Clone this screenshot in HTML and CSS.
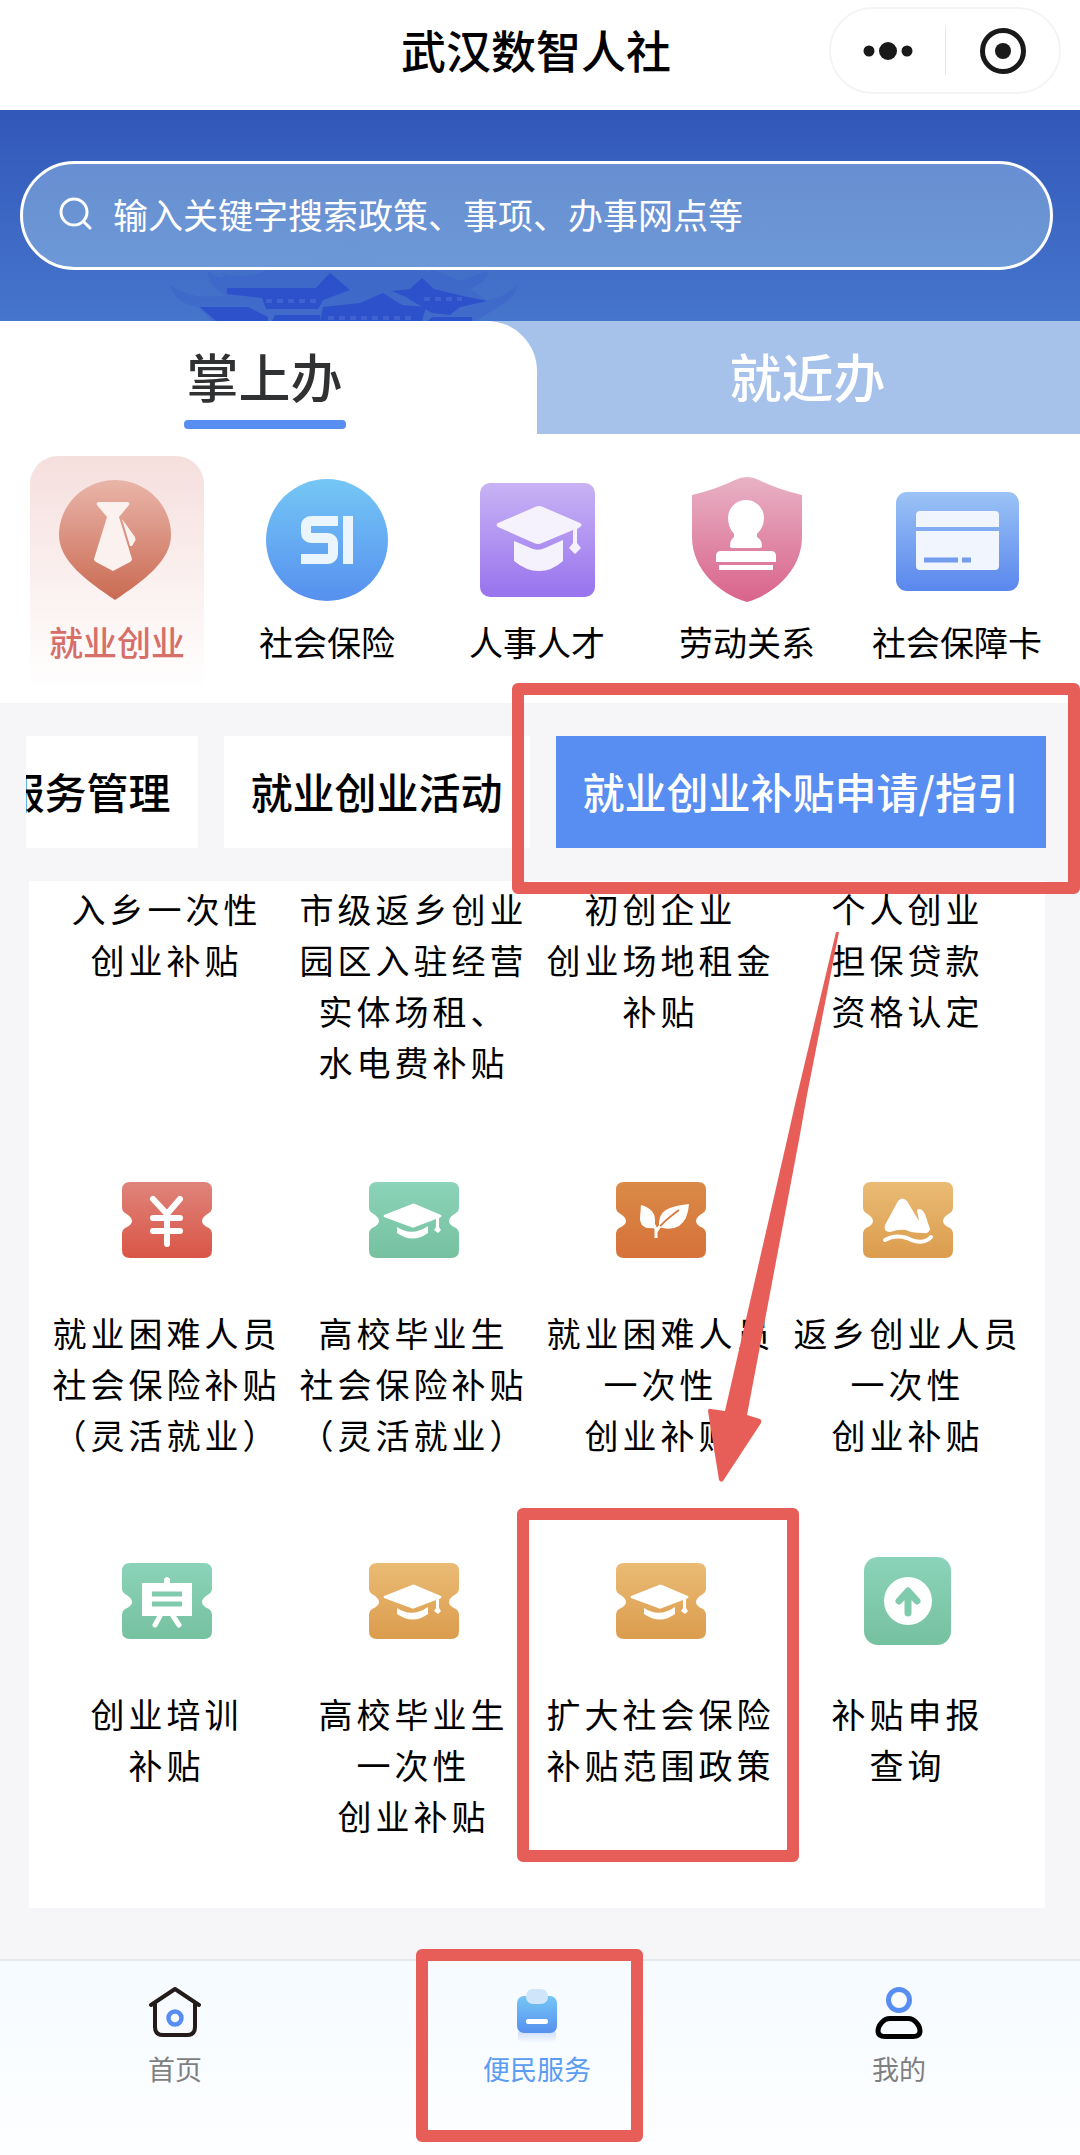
FILE: index.html
```html
<!DOCTYPE html>
<html lang="zh-CN">
<head>
  <meta charset="UTF-8" />
  <meta name="viewport" content="width=device-width, initial-scale=1" />
  <title>武汉数智人社</title>
  <link rel="stylesheet" href="styles.css">
</head>
<body>
  <!-- shared gradients and symbols -->
  <svg class="defs" width="0" height="0" aria-hidden="true">
    <defs>
      <linearGradient id="gRed" x1="0" y1="0" x2="0" y2="1"><stop offset="0" stop-color="#df847b"/><stop offset="1" stop-color="#d95546"/></linearGradient>
      <linearGradient id="gGreen" x1="0" y1="0" x2="0" y2="1"><stop offset="0" stop-color="#8bd3b9"/><stop offset="1" stop-color="#76c1a0"/></linearGradient>
      <linearGradient id="gOrange" x1="0" y1="0" x2="0" y2="1"><stop offset="0" stop-color="#da8a46"/><stop offset="1" stop-color="#d6713b"/></linearGradient>
      <linearGradient id="gGold" x1="0" y1="0" x2="0" y2="1"><stop offset="0" stop-color="#eabb75"/><stop offset="1" stop-color="#db9c4d"/></linearGradient>
      <linearGradient id="gPin" x1="0" y1="0" x2="0" y2="1"><stop offset="0" stop-color="#e9b5a9"/><stop offset="1" stop-color="#ca6a52"/></linearGradient>
      <linearGradient id="gSi" x1="0" y1="0" x2="0" y2="1"><stop offset="0" stop-color="#75c7f5"/><stop offset="1" stop-color="#5690ef"/></linearGradient>
      <linearGradient id="gPurple" x1="0" y1="0" x2="0" y2="1"><stop offset="0" stop-color="#c9b3f4"/><stop offset="1" stop-color="#9873ee"/></linearGradient>
      <linearGradient id="gPink" x1="0" y1="0" x2="0" y2="1"><stop offset="0" stop-color="#e8b2c5"/><stop offset="1" stop-color="#d9638b"/></linearGradient>
      <linearGradient id="gCard" x1="0" y1="0" x2="0" y2="1"><stop offset="0" stop-color="#9bc3f5"/><stop offset="1" stop-color="#5a87ee"/></linearGradient>
      <linearGradient id="gShade" x1="0" y1="0" x2="0" y2="1"><stop offset="0" stop-color="#c3d6fb"/><stop offset="1" stop-color="#c3d6fb" stop-opacity="0"/></linearGradient>
      <symbol id="ticket" viewBox="0 0 90 76">
        <path d="M8 0H82Q90 0 90 8V26Q90 29 87 31Q80 35 80 39T87 46Q90 48 90 51V68Q90 76 82 76H8Q0 76 0 68V51Q0 48 3 46Q10 43 10 39T3 31Q0 29 0 26V8Q0 0 8 0Z"/>
      </symbol>
      <symbol id="cap" viewBox="0 0 90 76">
        <path d="M15 33L43 22Q44 21 46 22L72 33Q73 34 72 35L70 36V45L72 48L69 51L65 48L67 45V37L46 45Q44 46 42 45L15 35Q14 34 15 33Z" fill="#fff"/>
        <path d="M28 45Q43 55 59 44V51Q44 62 28 51Z" fill="#fff"/>
      </symbol>
    </defs>
  </svg>

  <div class="page">
    <header class="topbar">
      <h1>武汉数智人社</h1>
      <div class="capsule">
        <button type="button" aria-label="更多">
          <svg width="50" height="20" viewBox="0 0 50 20"><circle cx="6" cy="10" r="5.5" fill="#191919"/><circle cx="25" cy="10" r="9" fill="#191919"/><circle cx="44" cy="10" r="5.5" fill="#191919"/></svg>
        </button>
        <button type="button" aria-label="关闭">
          <svg width="48" height="48" viewBox="0 0 48 48"><circle cx="24" cy="24" r="20.5" fill="none" stroke="#191919" stroke-width="5"/><circle cx="24" cy="24" r="8" fill="#191919"/></svg>
        </button>
      </div>
    </header>

    <section class="hero">
      <svg class="pagoda" width="350" height="100" viewBox="0 0 350 100" aria-hidden="true">
        <path d="M178 10H182L186 28Q200 42 232 50L226 44L262 52L257 46L290 60L318 50Q318 60 300 68L316 79Q338 76 347 63Q348 76 328 86L306 100H42L28 86Q4 82 0 64Q22 80 56 74Q38 66 38 50Q48 58 54 56L52 52Q80 60 98 48Q150 44 176 28Z" fill="#3a5fcb" opacity="0.4"/>
        <g fill="#2a4ccc" opacity="0.85">
          <path d="M57 67H146L160 52L180 69L153 79L148 88H96L92 77L57 73Z"/>
          <path d="M153 86L190 82L213 72L232 84L256 86L252 100H150Z"/>
          <path d="M222 70L240 68L252 57L264 68L297 76L317 80L290 86L280 94L262 92L236 76Z"/>
          <path d="M30 86H78L98 96V100H46Z"/>
          <path d="M105 94H150V100H102ZM262 96H302V100H258Z"/>
        </g>
        <path d="M96 80H146M254 78H292M158 97H246" stroke="#5a7cda" stroke-width="4" stroke-dasharray="6 5" opacity="0.4"/>
      </svg>
      <label class="search">
        <svg width="34" height="34" viewBox="0 0 34 34" fill="none" stroke="#fff" stroke-width="3" stroke-linecap="round"><circle cx="15" cy="15" r="13"/><path d="M25 25L31 31"/></svg>
        <input type="search" placeholder="输入关键字搜索政策、事项、办事网点等" aria-label="搜索">
      </label>
    </section>

    <nav class="tabs">
      <button type="button" class="tab active">掌上办</button>
      <button type="button" class="tab">就近办</button>
    </nav>

    <nav class="categories">
      <a class="category selected" href="#">
        <svg width="124" height="126" viewBox="0 0 124 126">
          <path d="M60 3C90 3 116 27 116 58C116 84 88 104 60 123C32 104 4 84 4 58C4 27 30 3 60 3Z" fill="url(#gPin)"/>
          <path d="M43 25H73Q75 26 74 28L64 40L77 82Q77 84 75 85L58 94L41 85Q39 84 39 82L52 40L42 28Q41 26 43 25Z" fill="#fbf1ef"/>
          <path d="M67 42L80 60Q81 63 80 64L77 69H75Z" fill="#fbf1ef"/>
        </svg>
        <span>就业创业</span>
      </a>
      <a class="category" href="#">
        <svg width="124" height="126" viewBox="0 0 124 126">
          <circle cx="62" cy="63" r="61" fill="url(#gSi)"/>
          <path d="M73 44H47Q41 44 41 49V55Q41 61 47 61H62Q68 61 68 67V76Q68 82 62 82H36M83 39V87" fill="none" stroke="#eaf5fe" stroke-width="10"/>
        </svg>
        <span>社会保险</span>
      </a>
      <a class="category" href="#">
        <svg width="124" height="126" viewBox="0 0 124 126">
          <rect x="5" y="6" width="115" height="114" rx="10" fill="url(#gPurple)"/>
          <path d="M23 46L60 30Q64 28 68 30L105 46Q108 48 105 50L102 52V66L106 71L100 77L94 71L98 66V53L67 66Q63 68 59 66L23 50Q20 48 23 46Z" fill="#f5f2fd"/>
          <path d="M39 64L58 72Q64 74 70 71L88 63V84Q77 94 64 94T39 84Z" fill="#f5f2fd"/>
        </svg>
        <span>人事人才</span>
      </a>
      <a class="category" href="#">
        <svg width="124" height="126" viewBox="0 0 124 126">
          <path d="M50 3Q62-3 74 3Q92 12 117 18V60C117 92 90 117 62 125C34 117 7 92 7 60V18Q32 12 50 3Z" fill="url(#gPink)"/>
          <path d="M61 23A18 18 0 0 1 79 41Q79 50 72 57V60Q77 63 77 69Q77 71 74 71H48Q45 71 45 69Q45 63 49 60V57Q43 50 43 41A18 18 0 0 1 61 23Z" fill="#fff"/>
          <path d="M36 74H86Q91 74 91 79V85H31V79Q31 74 36 74ZM34 88H88V93H34Z" fill="#fff"/>
        </svg>
        <span>劳动关系</span>
      </a>
      <a class="category" href="#">
        <svg width="124" height="126" viewBox="-1 0 124 126">
          <rect x="0" y="15" width="123" height="99" rx="11" fill="url(#gCard)"/>
          <path d="M24 34H99Q103 34 103 38V50H20V38Q20 34 24 34ZM20 54H103V89Q103 93 99 93H24Q20 93 20 89Z" fill="#f1f6fe"/>
          <path d="M28 83H62M66 83H75" stroke="#759bef" stroke-width="5"/>
        </svg>
        <span>社会保障卡</span>
      </a>
    </nav>

    <main>
      <div class="chips">
        <button type="button" class="chip">服务管理</button>
        <button type="button" class="chip">就业创业活动</button>
        <button type="button" class="chip current">就业创业补贴申请/指引</button>
      </div>

      <section class="services">
        <a class="service" href="#">入乡一次性<br>创业补贴</a>
        <a class="service" href="#">市级返乡创业<br>园区入驻经营<br>实体场租、<br>水电费补贴</a>
        <a class="service" href="#">初创企业<br>创业场地租金<br>补贴</a>
        <a class="service" href="#">个人创业<br>担保贷款<br>资格认定</a>

        <a class="service with-icon" href="#">
          <svg width="90" height="100" viewBox="0 -12 90 100">
            <use href="#ticket" width="90" height="76" fill="url(#gRed)"/>
            <path d="M31 17L45 32L58 17M45 32V62M31 36H58M31 49H58" fill="none" stroke="#fff" stroke-width="6" stroke-linecap="round"/>
          </svg>
          就业困难人员<br>社会保险补贴<br>（灵活就业）
        </a>
        <a class="service with-icon" href="#">
          <svg width="90" height="100" viewBox="0 -12 90 100">
            <use href="#ticket" width="90" height="76" fill="url(#gGreen)"/>
            <use href="#cap" width="90" height="76"/>
          </svg>
          高校毕业生<br>社会保险补贴<br>（灵活就业）
        </a>
        <a class="service with-icon" href="#">
          <svg width="90" height="100" viewBox="0 -12 90 100">
            <use href="#ticket" width="90" height="76" fill="url(#gOrange)"/>
            <path d="M25 23Q39 27 39 38V46Q24 48 24 36ZM43 45Q42 30 54 26Q62 23 73 22Q72 38 63 44Q56 48 47 46Z" fill="#fff"/>
            <path d="M63 28Q44 42 43 47" fill="none" stroke="#d87b40" stroke-width="2"/>
            <path d="M35 38L40 47V56M40 50L44 44" fill="none" stroke="#fff" stroke-width="3"/>
          </svg>
          就业困难人员<br>一次性<br>创业补贴
        </a>
        <a class="service with-icon" href="#">
          <svg width="90" height="100" viewBox="0 -12 90 100">
            <use href="#ticket" width="90" height="76" fill="url(#gGold)"/>
            <path d="M35 19Q39 14 44 19L56 39L54 28Q58 25 62 32L67 47Q66 52 60 51Q48 51 43 48Q36 47 27 50Q20 50 22 43Z" fill="#fff"/>
            <path d="M22 58Q32 52 44 56Q60 64 68 55" fill="none" stroke="#fff" stroke-width="4" stroke-linecap="round"/>
          </svg>
          返乡创业人员<br>一次性<br>创业补贴
        </a>

        <a class="service with-icon" href="#">
          <svg width="90" height="100" viewBox="0 -12 90 100">
            <use href="#ticket" width="90" height="76" fill="url(#gGreen)"/>
            <path d="M20 20H42V16Q45 12 48 16V20H70V53H20Z" fill="#fff"/>
            <path d="M30 31H60M30 41H60" stroke="#80cbae" stroke-width="5"/>
            <path d="M38 53L33 62M51 53L57 62" stroke="#fff" stroke-width="5" stroke-linecap="round"/>
          </svg>
          创业培训<br>补贴
        </a>
        <a class="service with-icon" href="#">
          <svg width="90" height="100" viewBox="0 -12 90 100">
            <use href="#ticket" width="90" height="76" fill="url(#gGold)"/>
            <use href="#cap" width="90" height="76"/>
          </svg>
          高校毕业生<br>一次性<br>创业补贴
        </a>
        <a class="service with-icon" href="#">
          <svg width="90" height="100" viewBox="0 -12 90 100">
            <use href="#ticket" width="90" height="76" fill="url(#gGold)"/>
            <use href="#cap" width="90" height="76"/>
          </svg>
          扩大社会保险<br>补贴范围政策
        </a>
        <a class="service with-icon" href="#">
          <svg width="90" height="100" viewBox="0 -12 90 100">
            <rect x="1" y="-6" width="87" height="88" rx="14" fill="url(#gGreen)"/>
            <circle cx="45" cy="38" r="24" fill="#fff"/>
            <path d="M45 50V29M36 38L45 28L54 38" fill="none" stroke="#80cbae" stroke-width="7" stroke-linecap="round" stroke-linejoin="round"/>
          </svg>
          补贴申报<br>查询
        </a>
      </section>
    </main>

    <footer class="tabbar">
      <a href="#">
        <svg width="56" height="60" viewBox="0 0 56 60" fill="none">
          <path d="M4 20L28 4L52 20M8 19V42Q8 50 16 50H40Q48 50 48 42V19" stroke="#231c18" stroke-width="4" stroke-linecap="round" stroke-linejoin="round"/>
          <circle cx="28" cy="33" r="6.5" stroke="#588df1" stroke-width="4.5"/>
        </svg>
        <span>首页</span>
      </a>
      <a class="on" href="#">
        <svg width="56" height="60" viewBox="0 0 56 60">
          <rect x="9" y="44" width="38" height="14" rx="5" fill="url(#gShade)"/>
          <rect x="8" y="11" width="40" height="37" rx="7" fill="url(#gSi)"/>
          <rect x="17" y="4" width="22" height="15" rx="7" fill="#cfe5fa"/>
          <rect x="17" y="34" width="22" height="5" rx="2" fill="#fff"/>
        </svg>
        <span>便民服务</span>
      </a>
      <a href="#">
        <svg width="56" height="60" viewBox="0 0 56 60" fill="none">
          <circle cx="28" cy="15" r="10.5" stroke="#588df1" stroke-width="5"/>
          <path d="M19 33.500H37C44 33.500 49 41 49 46Q49 51.500 42 51.500H14Q7 51.500 7 46C7 41 12 33.500 19 33.500Z" stroke="#000" stroke-width="5"/>
        </svg>
        <span>我的</span>
      </a>
    </footer>

    <!-- step marks drawn over the page -->
    <svg class="marks" viewBox="0 0 1080 2155" aria-hidden="true">
      <g fill="none" stroke="#e75e58" stroke-width="12" stroke-linejoin="round">
        <rect x="518" y="689" width="556" height="199"/>
        <rect x="523" y="1514" width="270" height="342"/>
        <rect x="422" y="1955" width="215" height="181"/>
      </g>
      <path d="M836 932H839L807 1095L799 1140L747 1415L760 1419Q762 1420 761 1423L723 1481Q721 1483 719 1480L708 1411Q708 1408 711 1409L725 1411L787 1140L796 1100Z" fill="#e75e58"/>
    </svg>
  </div>
</body>
</html>
```
FILE: styles.css
```css
* {
  box-sizing: border-box;
}
body {
  margin: 0;
  background-color: #f6f6f9;
  color: #000;
  font-family: "Noto Sans CJK SC", sans-serif;
}
a {
  color: inherit;
  text-decoration: none;
}
button {
  border: none;
  padding: 0;
  background: none;
  color: inherit;
  font-family: inherit;
  cursor: pointer;
}
svg {
  display: block;
}
.defs {
  position: absolute;
}
.page {
  position: relative;
  overflow: hidden;
}

/* top bar */
.topbar {
  display: grid;
  grid-template-columns: 1fr auto 1fr;
  align-items: start;
  height: 110px;
  padding: 7px 19px 0 11px;
  background-color: #fff;
}
.topbar h1 {
  grid-column: 2;
  margin: 0;
  font-size: 45px;
  line-height: 86px;
  font-weight: 500;
}
.capsule {
  justify-self: end;
  display: grid;
  grid-template-columns: 1fr 1fr;
  width: 232px;
  height: 87px;
  padding: 17px 0;
  border: 2px solid #f4f4f4;
  border-radius: 44px;
}
.capsule button {
  display: flex;
  align-items: center;
  justify-content: center;
}
.capsule button + button {
  border-left: 1px solid #e8e8e8;
}

/* search */
.hero {
  position: relative;
  padding: 51px 27px 51px 20px;
  background: linear-gradient(#3258ba, #4675cc);
}
.pagoda {
  position: absolute;
  left: 170px;
  bottom: 0;
}
.search {
  position: relative;
  display: flex;
  align-items: center;
  gap: 20px;
  height: 109px;
  padding: 0 36px 4px;
  border: 3px solid #fff;
  border-radius: 55px;
  background: linear-gradient(rgba(106, 145, 210, 0.95), rgba(112, 156, 216, 0.92));
}
.search input {
  flex: 1;
  min-width: 0;
  padding: 0;
  border: none;
  outline: none;
  background: none;
  color: #fff;
  font-family: inherit;
  font-size: 35px;
}
.search input::placeholder {
  color: #fff;
  opacity: 1;
}

/* main tabs */
.tabs {
  display: grid;
  grid-template-columns: 537fr 543fr;
  background-color: #a6c1ea;
}
.tab {
  height: 113px;
  padding: 0 2px 3px 0;
  color: #fff;
  font-size: 52px;
  line-height: 76px;
  font-weight: 500;
}
.tab.active {
  display: flex;
  flex-direction: column;
  align-items: center;
  padding: 17px 8px 0 0;
  border-radius: 0 50px 0 0;
  background-color: #fff;
  color: #303133;
}
.tab.active::after {
  content: "";
  width: 162px;
  height: 9px;
  margin-top: 6px;
  border-radius: 4px;
  background-color: #588df1;
}

/* categories */
.categories {
  display: grid;
  grid-template-columns: repeat(5, 1fr);
  padding: 22px 18px 13px 12px;
  background-color: #fff;
}
.category {
  display: flex;
  flex-direction: column;
  align-items: center;
  gap: 13px;
  height: 234px;
  margin: 0 18px;
  padding-top: 21px;
  font-size: 34px;
  line-height: 52px;
  white-space: nowrap;
}
.category.selected {
  border-radius: 28px 28px 0 0;
  background: linear-gradient(#f5dfdd, #fff);
  color: #d56f68;
  font-weight: 500;
}

/* sub category chips, scrolled to the end */
.chips {
  display: flex;
  justify-content: flex-end;
  gap: 26px;
  margin: 33px 34px 33px 26px;
  overflow: hidden;
}
.chip {
  flex: none;
  height: 112px;
  padding: 0 27px 4px;
  background-color: #fff;
  font-size: 42px;
  font-weight: 500;
  white-space: nowrap;
}
.chip.current {
  background-color: #588df1;
  color: #fff;
}

/* services */
.services {
  display: grid;
  grid-template-columns: repeat(4, 1fr);
  row-gap: 83px;
  margin: 0 35px 51px 29px;
  padding: 2px 14px 59px;
  background-color: #fff;
}
.service {
  font-size: 34px;
  line-height: 51px;
  letter-spacing: 4px;
  text-align: center;
  white-space: nowrap;
}
.with-icon {
  min-height: 298px;
}
.service svg {
  margin: 0 auto 37px;
}

/* bottom bar */
.tabbar {
  display: flex;
  justify-content: space-between;
  height: 196px;
  padding: 24px 154px 0 148px;
  border-top: 2px solid #e6eaed;
  background: linear-gradient(#f6fbff, #fdfeff);
  color: #7f7f7f;
  font-size: 27px;
  line-height: 40px;
}
.tabbar a {
  display: flex;
  flex-direction: column;
  align-items: center;
  gap: 4px;
}
.tabbar svg {
  margin: 0 -1px;
}
.tabbar .on {
  color: #5b9cf3;
}

.marks {
  position: absolute;
  top: 0;
  left: 0;
  width: 100%;
  pointer-events: none;
}
```
